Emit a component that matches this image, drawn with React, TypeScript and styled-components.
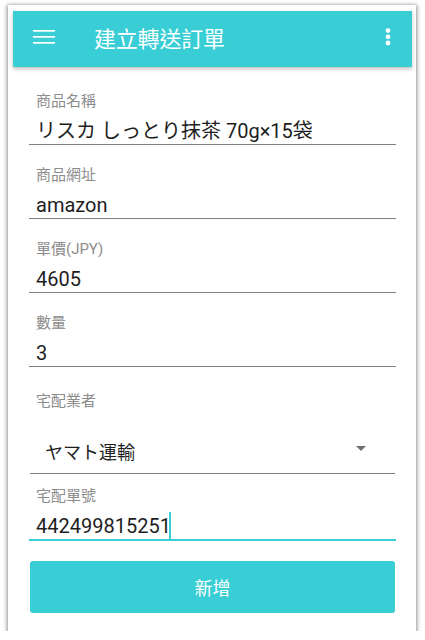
import React from "react";
import styled, { createGlobalStyle } from "styled-components";

const GlobalStyle = createGlobalStyle`
  html, body {
    margin: 0;
    padding: 0;
    background: #ffffff;
  }
  body {
    font-family: Roboto, "Noto Sans CJK TC", "Noto Sans CJK JP", sans-serif;
  }
`;

const TEAL = "#39cdd5";

const Frame = styled.div`
  margin: 5px 0 0 8px;
  width: 408px;
  height: 626px;
  box-sizing: border-box;
  padding: 6px 4px 0 5px;
  background: #ffffff;
  box-shadow: 0 1px 4px 1px rgba(0, 0, 0, 0.45);
  display: flex;
  flex-direction: column;
`;

const AppBar = styled.div`
  height: 56px;
  background: ${TEAL};
  display: flex;
  align-items: center;
  padding: 0 21px 0 20px;
  box-shadow: 0 2px 4px rgba(0, 0, 0, 0.25);
  position: relative;
  z-index: 1;
`;

const IconBox = styled.div`
  display: flex;
  align-items: center;
  justify-content: center;
  margin-top: -5px;
`;

const Title = styled.div`
  flex: 1;
  margin-left: 39px;
  margin-top: -5px;
  color: #ffffff;
  font-size: 22px;
  font-family: "Noto Sans CJK TC", sans-serif;
  letter-spacing: -0.2px;
`;

const Form = styled.div`
  padding: 4px 16px 0 16px;
  display: flex;
  flex-direction: column;
`;

const Field = styled.div<{ $top: number }>`
  padding-top: ${(p) => p.$top}px;
  display: flex;
  flex-direction: column;
`;

const Label = styled.div`
  height: 20px;
  line-height: 20px;
  font-size: 15px;
  color: #8c8c8c;
  padding-left: 7px;
`;

const Value = styled.div<{ $focused?: boolean }>`
  margin-top: 8px;
  height: 25px;
  line-height: 25px;
  font-size: 20px;
  color: #1e1e1e;
  padding-left: 7px;
  white-space: nowrap;
  border-bottom: ${(p) => (p.$focused ? `2px solid ${TEAL}` : "1px solid #808080")};
  display: flex;
  align-items: center;
`;

const Cursor = styled.span`
  display: inline-block;
  width: 2px;
  height: 27px;
  background: ${TEAL};
  margin-left: -2px;
  margin-top: -2px;
`;

const Spinner = styled.div`
  margin-top: 15px;
  height: 48px;
  margin-left: 1px;
  margin-right: 1px;
  border-bottom: 1px solid #808080;
  display: flex;
  align-items: center;
  padding: 3px 29px 0 15px;
  box-sizing: border-box;
`;

const SpinnerText = styled.div`
  flex: 1;
  font-size: 18px;
  color: #1e1e1e;
  font-family: "Noto Sans CJK JP", sans-serif;
`;

const Arrow = styled.div`
  width: 0;
  height: 0;
  border-left: 5px solid transparent;
  border-right: 5px solid transparent;
  border-top: 5px solid #707070;
  margin-top: -6px;
`;

const SubmitButton = styled.button`
  margin: 20px 1px 0 1px;
  height: 52px;
  border: none;
  border-radius: 3px;
  background: ${TEAL};
  color: #ffffff;
  font-size: 18px;
  font-family: "Noto Sans CJK TC", sans-serif;
  cursor: pointer;
`;

const MenuIcon = () => (
  <svg width="22" height="14" viewBox="0 0 22 14">
    <rect x="0" y="0" width="22" height="1.7" fill="#fff" />
    <rect x="0" y="6" width="22" height="1.7" fill="#fff" />
    <rect x="0" y="12" width="22" height="1.7" fill="#fff" />
  </svg>
);

const MoreIcon = () => (
  <svg width="6" height="18" viewBox="0 0 6 18">
    <circle cx="3" cy="2.6" r="2.4" fill="#fff" />
    <circle cx="3" cy="8.8" r="2.4" fill="#fff" />
    <circle cx="3" cy="15" r="2.4" fill="#fff" />
  </svg>
);

const fields = [
  { label: "商品名稱", value: "リスカ しっとり抹茶 70g×15袋" },
  { label: "商品網址", value: "amazon" },
  { label: "單價(JPY)", value: "4605" },
  { label: "數量", value: "3" },
];

export default function App() {
  return (
    <>
      <GlobalStyle />
      <Frame>
        <AppBar>
          <IconBox>
            <MenuIcon />
          </IconBox>
          <Title>建立轉送訂單</Title>
          <IconBox>
            <MoreIcon />
          </IconBox>
        </AppBar>
        <Form>
          {fields.map((f) => (
            <Field key={f.label} $top={20}>
              <Label>{f.label}</Label>
              <Value>{f.value}</Value>
            </Field>
          ))}
          <Field $top={24}>
            <Label>宅配業者</Label>
            <Spinner>
              <SpinnerText>ヤマト運輸</SpinnerText>
              <Arrow />
            </Spinner>
          </Field>
          <Field $top={12}>
            <Label>宅配單號</Label>
            <Value $focused>
              442499815251
              <Cursor />
            </Value>
          </Field>
          <SubmitButton>新增</SubmitButton>
        </Form>
      </Frame>
    </>
  );
}
